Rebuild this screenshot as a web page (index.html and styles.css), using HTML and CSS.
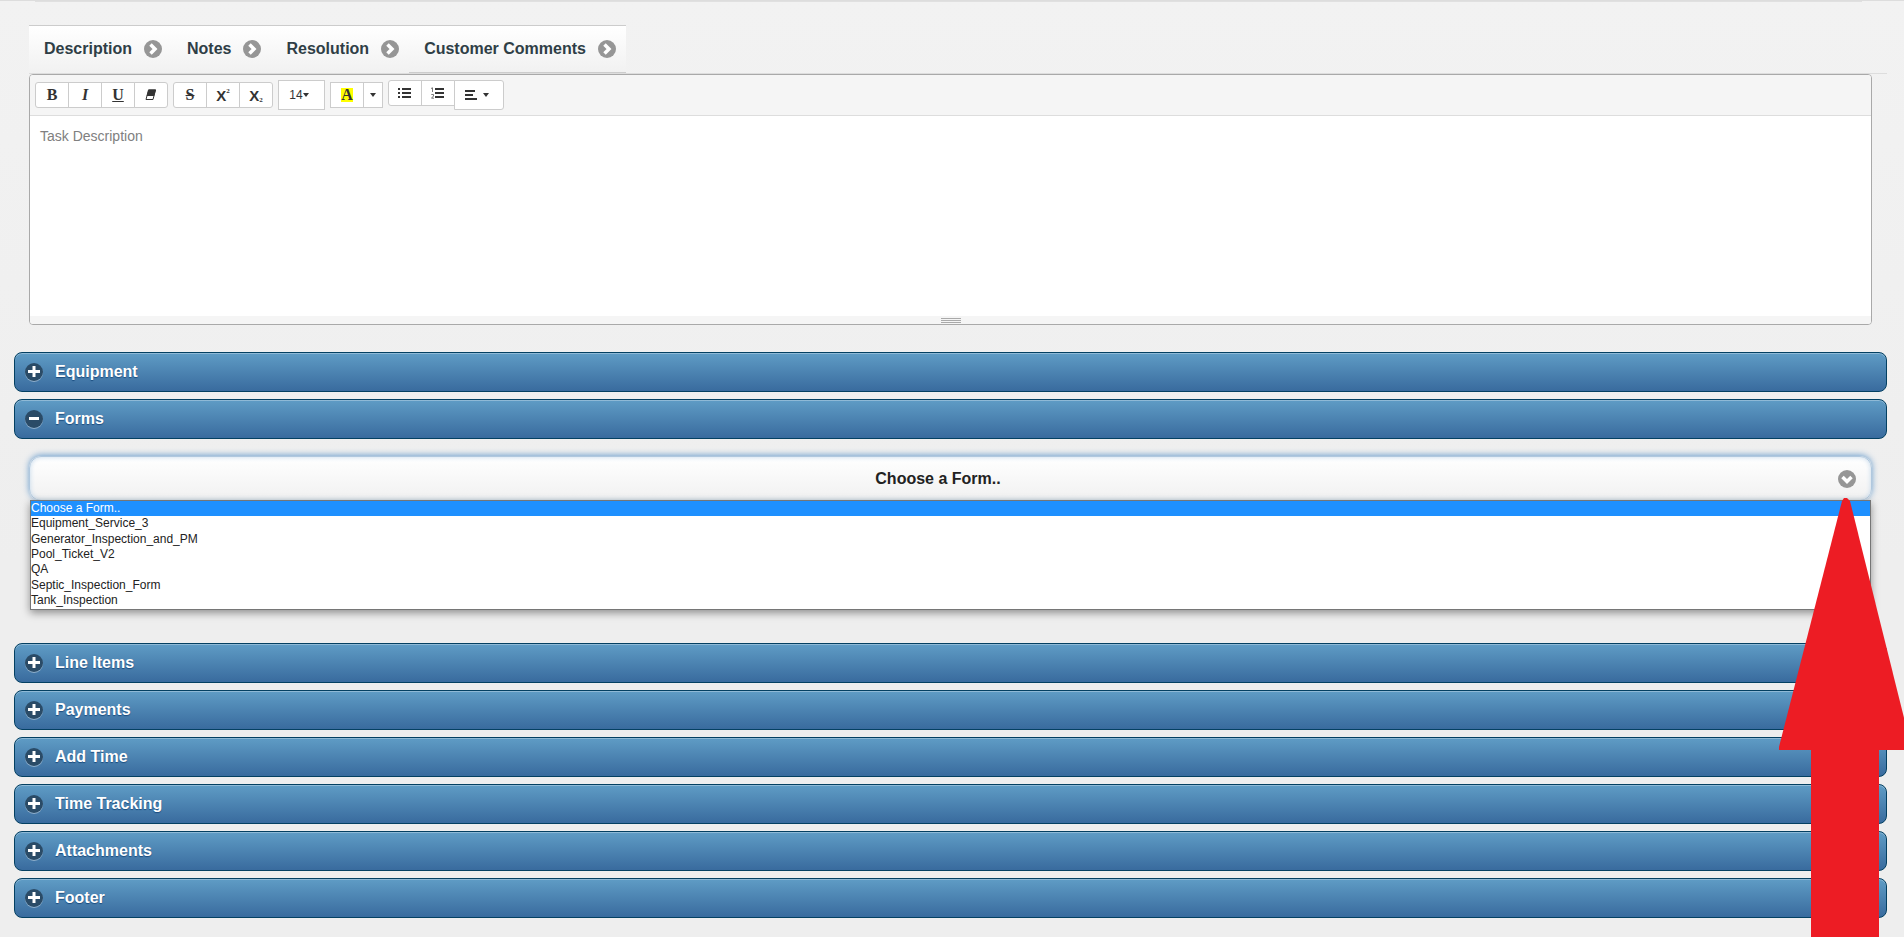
FILE: index.html
```html
<!DOCTYPE html>
<html lang="en">
    <head>
        <meta charset="utf-8">
        <title>Task</title>
        <link rel="stylesheet" href="styles.css">
    </head>
    <body>
        <svg class="sprite" aria-hidden="true">
            <symbol id="icon-right" viewBox="0 0 18 18">
                <circle cx="9" cy="9" r="9" fill="#969696"/>
                <path d="M6.500 4.500 11 9 6.500 13.500" fill="none" stroke="#fff" stroke-width="3.500"/>
            </symbol>
            <symbol id="icon-down" viewBox="0 0 18 18">
                <circle cx="9" cy="9" r="9" fill="#969696"/>
                <path d="M4.500 7 9 11.500 13.500 7" fill="none" stroke="#fff" stroke-width="3.500"/>
            </symbol>
            <symbol id="icon-plus" viewBox="0 0 18 18">
                <path d="M3 8.500H15M9 3V14" fill="none" stroke="#fff" stroke-width="3"/>
            </symbol>
            <symbol id="icon-minus" viewBox="0 0 18 18">
                <path d="M4 8.500H14" fill="none" stroke="#fff" stroke-width="3"/>
            </symbol>
        </svg>

        <main class="page">
            <section class="task-text">
                <nav class="tabs">
                    <a href="#description" class="tab">Description <svg class="icon"><use href="#icon-right"/></svg></a>
                    <a href="#notes" class="tab">Notes <svg class="icon"><use href="#icon-right"/></svg></a>
                    <a href="#resolution" class="tab">Resolution <svg class="icon"><use href="#icon-right"/></svg></a>
                    <a href="#comments" class="tab tab-last">Customer Comments <svg class="icon"><use href="#icon-right"/></svg></a>
                </nav>
                <div class="editor" id="description">
                    <div class="toolbar">
                        <div class="group rounded">
                            <button class="tool serif" title="Bold">B</button>
                            <button class="tool serif italic" title="Italic">I</button>
                            <button class="tool serif underline" title="Underline">U</button>
                            <button class="tool" title="Remove Font Style">
                                <svg width="12" height="12" viewBox="0 0 12 12"><path d="M3.500 1h7L8 10.500H1z" fill="#fff" stroke="#333"/><path d="M3.500 .5h7.500L9.200 7H1.700z" fill="#333"/></svg>
                            </button>
                        </div>
                        <div class="group rounded">
                            <button class="tool serif strike" title="Strikethrough">S</button>
                            <button class="tool script" title="Superscript">X<sup>2</sup></button>
                            <button class="tool script" title="Subscript">X<sub>2</sub></button>
                        </div>
                        <div class="group">
                            <button class="tool tall size" title="Font Size">14<span class="caret"></span></button>
                        </div>
                        <div class="group">
                            <button class="tool serif" title="Recent Color"><span class="mark">A</span></button>
                            <button class="tool narrow" title="More Color"><span class="caret"></span></button>
                        </div>
                        <div class="group rounded">
                            <button class="tool" title="Unordered list">
                                <svg width="14" height="12" viewBox="0 0 14 12"><path d="M0 2h2M0 6h2M0 10h2M4 2h9M4 6h9M4 10h9" stroke="#333" stroke-width="2"/></svg>
                            </button>
                            <button class="tool" title="Ordered list">
                                <svg width="14" height="12" viewBox="0 0 14 12"><path d="M4 2h9M4 6h9M4 10h9" stroke="#333" stroke-width="2"/><path d="M0 1.500 1.500.8V5M.3 7.500H2.500V9L.5 11.200H3" fill="none" stroke="#555" stroke-width=".8"/></svg>
                            </button>
                            <button class="tool tall para" title="Paragraph">
                                <svg width="12" height="10" viewBox="0 0 12 10"><path d="M0 1h10M0 5h8M0 9h12" stroke="#333" stroke-width="2"/></svg>
                                <span class="caret"></span>
                            </button>
                        </div>
                    </div>
                    <textarea class="text" placeholder="Task Description" aria-label="Task Description"></textarea>
                    <div class="resizebar"><span></span></div>
                </div>
            </section>

            <h3 class="bar"><button><svg class="icon"><use href="#icon-plus"/></svg>Equipment</button></h3>
            <h3 class="bar"><button aria-expanded="true"><svg class="icon"><use href="#icon-minus"/></svg>Forms</button></h3>
            <div class="forms">
                <div class="chooser">
                    <select class="choose" aria-label="Form">
                        <option>Choose a Form..</option>
                    </select>
                    <svg class="icon choose-icon"><use href="#icon-down"/></svg>
                </div>
                <ul class="options" role="listbox" aria-label="Forms">
                    <li role="option" aria-selected="true" class="selected">Choose a Form..</li>
                    <li role="option">Equipment_Service_3</li>
                    <li role="option">Generator_Inspection_and_PM</li>
                    <li role="option">Pool_Ticket_V2</li>
                    <li role="option">QA</li>
                    <li role="option">Septic_Inspection_Form</li>
                    <li role="option">Tank_Inspection</li>
                </ul>
            </div>
            <h3 class="bar"><button><svg class="icon"><use href="#icon-plus"/></svg>Line Items</button></h3>
            <h3 class="bar"><button><svg class="icon"><use href="#icon-plus"/></svg>Payments</button></h3>
            <h3 class="bar"><button><svg class="icon"><use href="#icon-plus"/></svg>Add Time</button></h3>
            <h3 class="bar"><button><svg class="icon"><use href="#icon-plus"/></svg>Time Tracking</button></h3>
            <h3 class="bar"><button><svg class="icon"><use href="#icon-plus"/></svg>Attachments</button></h3>
            <h3 class="bar"><button><svg class="icon"><use href="#icon-plus"/></svg>Footer</button></h3>
        </main>

        <!-- arrow pointing at the form drop-down -->
        <svg class="arrow" aria-hidden="true">
            <path d="M65 0h3L71 3 133 252H0V249L63 3z" fill="#ed1c24"/>
            <rect x="32" y="250" width="68" height="100%" fill="#ed1c24"/>
        </svg>
    </body>
</html>
```
FILE: styles.css
```css
* {
    box-sizing: border-box;
}
body {
    margin: 0;
    min-height: 100vh;
    position: relative;
    overflow: hidden;
    font-family: "Liberation Sans", Arial, sans-serif;
    font-size: 16px;
    color: #222;
    background: linear-gradient(#f2f2f2, #eee 60%);
    border-top: 1px solid #ddd;
}
button, select, textarea {
    font-family: inherit;
    margin: 0;
}
.sprite {
    display: none;
}
.icon {
    width: 18px;
    height: 18px;
    flex: none;
}
.page {
    padding: 0 17px 0 14px;
}
.page::before {
    content: "";
    display: block;
    height: 1px;
    margin: 0 25px 0 21px;
    background: #e0e0e0;
}

/* tabs */
.task-text {
    padding: 23px 0 27px;
}
.tabs {
    display: flex;
    margin-left: 15px;
    border-bottom: 1px solid #ddd;
}
.tab {
    display: flex;
    align-items: center;
    gap: 12px;
    height: 48px;
    padding: 0 10px 1px 15px;
    border-top: 1px solid #ccc;
    background: linear-gradient(#fff, #f1f1f1);
    color: #2f3e46;
    font-weight: bold;
    text-decoration: none;
}
.tab-last {
    padding-bottom: 0;
    border-bottom: 1px solid #ccc;
}

/* editor */
.editor {
    margin: 0 15px;
    border: 1px solid #a9a9a9;
    border-radius: 4px;
    background: #fff;
    overflow: hidden;
}
.toolbar {
    display: flex;
    align-items: center;
    gap: 5px;
    height: 41px;
    padding-left: 5px;
    background: #f5f5f5;
    border-bottom: 1px solid #ddd;
}
.group {
    display: flex;
    align-items: flex-start;
}
.tool {
    display: flex;
    align-items: center;
    justify-content: center;
    width: 34px;
    height: 26px;
    padding: 0;
    border: 1px solid #ccc;
    background: #fff;
    color: #333;
    font-size: 12px;
}
.tool + .tool {
    margin-left: -1px;
}
.rounded .tool:first-child {
    border-radius: 3px 0 0 3px;
}
.rounded .tool:last-child {
    border-radius: 0 3px 3px 0;
}
.serif {
    font-family: "Liberation Serif", serif;
    font-size: 16px;
    font-weight: bold;
}
.italic {
    font-style: italic;
}
.underline {
    text-decoration: underline;
}
.strike {
    text-decoration: line-through;
}
.script {
    font-size: 15px;
    font-weight: bold;
}
.script sup, .script sub {
    font-family: "Liberation Serif", serif;
    font-size: 7px;
}
.script sup {
    align-self: flex-start;
    margin-top: 4px;
}
.script sub {
    align-self: flex-end;
    margin-bottom: 3px;
}
.tall {
    height: 30px;
}
.size {
    width: 47px;
    padding-right: 5px;
}
.narrow {
    width: 20px;
}
.para {
    width: 50px;
    gap: 6px;
    padding-right: 5px;
}
.mark {
    width: 12px;
    line-height: 14px;
    background: #ff0;
}
.caret {
    border: 3px solid transparent;
    border-top: 4px solid #333;
    border-bottom: 0;
}
.text {
    display: block;
    width: 100%;
    height: 200px;
    padding: 12px 10px;
    border: 0;
    outline: 0;
    resize: none;
    font-size: 14px;
}
.text::placeholder {
    color: #808080;
}
.resizebar {
    height: 8px;
    padding-top: 2px;
    background: #f5f5f5;
}
.resizebar span {
    display: block;
    width: 20px;
    height: 5px;
    margin: 0 auto;
    background: repeating-linear-gradient(#a9a9a9 0 1px, #f5f5f5 1px 2px);
}

/* collapsible bars */
.bar {
    margin: 0 0 7px;
    font-size: 16px;
}
.bar button {
    display: flex;
    align-items: center;
    gap: 12px;
    width: 100%;
    height: 40px;
    padding: 0 10px;
    border: 1px solid #044062;
    border-radius: 8px;
    background: linear-gradient(#5f9cc5, #396b9e);
    box-shadow: inset 0 1px 0 rgba(255, 255, 255, 0.3);
    color: #fff;
    font-size: 16px;
    font-weight: bold;
    text-shadow: 0 1px 1px #194b7e;
}
.bar .icon {
    border-radius: 9px;
    background: #2a4b67;
    box-shadow: 0 1px 0 rgba(255, 255, 255, 0.4);
}

/* form chooser */
.forms {
    position: relative;
    height: 197px;
    padding: 10px 15px 0;
}
.chooser {
    position: relative;
}
.choose {
    display: block;
    width: 100%;
    height: 45px;
    padding: 0 40px 0 15px;
    appearance: none;
    border: 1px solid #b0c8de;
    border-radius: 12px;
    background: linear-gradient(#fff, #f1f1f1);
    box-shadow: 0 -1px 6px #6d9fce, inset 0 0 5px #c0d6ea;
    color: #222;
    font-size: 16px;
    font-weight: bold;
    text-align: center;
    text-align-last: center;
}
.choose-icon {
    position: absolute;
    right: 16px;
    top: 14px;
    pointer-events: none;
}
.options {
    position: absolute;
    top: 54px;
    left: 16px;
    right: 16px;
    display: flex;
    flex-direction: column;
    justify-content: space-between;
    height: 110px;
    margin: 0;
    padding: 0 0 1px;
    list-style: none;
    border: 1px solid #767676;
    background: #fff;
    box-shadow: 0 3px 8px rgba(0, 0, 0, 0.4);
    font-size: 12px;
    line-height: 15px;
}
.options .selected {
    background: #1e90ff;
    color: #fff;
}

.arrow {
    position: absolute;
    top: 497px;
    right: 0;
    bottom: 0;
    width: 125px;
    height: calc(100% - 497px);
}
```
